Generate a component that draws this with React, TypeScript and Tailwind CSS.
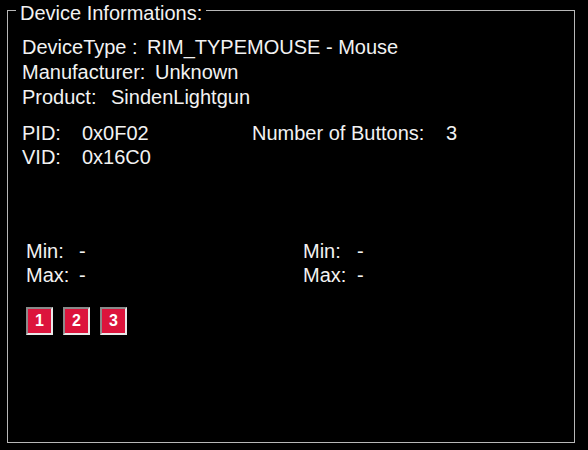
import React from "react";

const font = { fontFamily: '"Liberation Sans", Arial, sans-serif' };

function Field({ label, value, valueX }: { label: string; value: string; valueX: string }) {
  return (
    <div className="flex">
      <span className={valueX}>{label}</span>
      <span>{value}</span>
    </div>
  );
}

function RedButton({ n }: { n: number }) {
  return (
    <div className="flex h-[28px] w-[27px] items-center justify-center border-2 border-t-[#8a8a8a] border-l-[#8a8a8a] border-b-[#e8e8e8] border-r-[#e8e8e8] bg-[#dc143c] text-[16px] font-bold text-white">
      {n}
    </div>
  );
}

export default function App() {
  return (
    <div className="h-[450px] w-[588px] bg-black text-[20px] text-[#f2f2f2]" style={font}>
      <fieldset className="ml-[7px] h-[443px] w-[568px] border border-[#b8b8b8] px-[14px] pb-0 pt-0">
        <legend className="-ml-[6px] translate-y-[3px] px-[4px] leading-[20px]">Device Informations:</legend>

        <div className="pt-[15px] leading-[25px]">
          <Field label="DeviceType :" value="RIM_TYPEMOUSE - Mouse" valueX="w-[125px]" />
          <Field label="Manufacturer:" value="Unknown" valueX="w-[133px]" />
          <Field label="Product:" value="SindenLightgun" valueX="w-[89px]" />
        </div>

        <div className="mt-[11px] grid grid-cols-[230px_1fr] leading-[24px]">
          <Field label="PID:" value="0x0F02" valueX="w-[60px]" />
          <Field label="Number of Buttons:" value="3" valueX="w-[194px]" />
          <Field label="VID:" value="0x16C0" valueX="w-[60px]" />
        </div>

        <div className="mt-[70px] grid grid-cols-[277px_1fr] pl-[4px] leading-[24px]">
          <div>
            <Field label="Min:" value="-" valueX="w-[53px]" />
            <Field label="Max:" value="-" valueX="w-[53px]" />
          </div>
          <div>
            <Field label="Min:" value="-" valueX="w-[54px]" />
            <Field label="Max:" value="-" valueX="w-[54px]" />
          </div>
        </div>

        <div className="mt-[20px] flex gap-[10px] pl-[4px]">
          <RedButton n={1} />
          <RedButton n={2} />
          <RedButton n={3} />
        </div>
      </fieldset>
    </div>
  );
}
